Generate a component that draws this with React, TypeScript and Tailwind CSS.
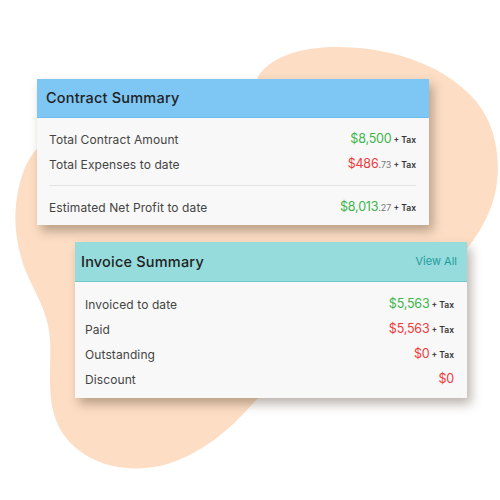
import React from "react";

const font = { fontFamily: "Inter, 'Noto Sans', sans-serif" };

function Amount({ main, cents, color, tax = true }: { main: string; cents?: string; color: string; tax?: boolean }) {
  return (
    <span className="flex items-baseline">
      <span className={`text-[12.5px] tracking-[-0.2px] ${color}`}>{main}</span>
      {cents && <span className="text-[9px] text-[#777]">{cents}</span>}
      {tax && <span className="ml-[2px] text-[8.5px] font-semibold text-[#333]">+ Tax</span>}
    </span>
  );
}

function Row({ label, children }: { label: string; children: React.ReactNode }) {
  return (
    <div className="flex h-[25px] items-center justify-between">
      <span className="text-[12px] text-[#444] tracking-[0.1px]">{label}</span>
      {children}
    </div>
  );
}

export default function App() {
  const green = "text-[#3cb54a]";
  const red = "text-[#f03a3a]";
  return (
    <div className="relative h-[500px] w-[500px] overflow-hidden bg-white" style={font}>
      <svg className="absolute left-0 top-0" width="500" height="500" viewBox="0 0 500 500">
        <path
          d="M257 79 C 265 62, 290 48, 333 47 C 380 46, 440 60, 475 100 C 502 132, 502 178, 491 207 C 480 236, 465 250, 450 270 C 400 330, 300 370, 257 399 C 230 430, 200 456, 160 466 C 120 474, 83 462, 63 434 C 44 405, 52 370, 50 340 C 48 305, 28 285, 21 257 C 13 230, 13 200, 24 170 C 45 120, 120 90, 180 82 C 220 78, 245 82, 257 79 Z"
          fill="#fddec5"
        />
      </svg>
      <div className="relative flex flex-col pt-[79px]">
        <div className="ml-[37px] w-[392px] bg-[#f8f8f8] shadow-[4px_6px_10px_rgba(60,40,20,0.35)]">
          <div className="flex h-[39px] items-center border-b border-[#6fbcee] bg-[#7ec6f3] pl-[9px]">
            <span className="text-[14.5px] font-medium text-[#222] tracking-[0.2px]">Contract Summary</span>
          </div>
          <div className="px-[12px] pb-[5px] pt-[9px] pr-[13px]">
            <Row label="Total Contract Amount">
              <Amount main="$8,500" color={green} />
            </Row>
            <Row label="Total Expenses to date">
              <Amount main="$486" cents=".73" color={red} />
            </Row>
            <div className="mt-[8px] h-px bg-[#e3e3e3]" />
            <div className="mt-[9px]">
              <Row label="Estimated Net Profit to date">
                <Amount main="$8,013" cents=".27" color={green} />
              </Row>
            </div>
          </div>
        </div>
        <div className="ml-[75px] mt-[17px] w-[392px] bg-[#f8f8f8] shadow-[4px_6px_10px_rgba(60,40,20,0.35)]">
          <div className="flex h-[40px] items-center justify-between border-b border-[#6fcacb] bg-[#96dcdd] pl-[6px] pr-[10px]">
            <span className="text-[14.5px] font-medium text-[#222] tracking-[0.2px]">Invoice Summary</span>
            <span className="text-[11px] text-[#1e9a9a]">View All</span>
          </div>
          <div className="pb-[6px] pl-[10px] pr-[13px] pt-[10px]">
            <Row label="Invoiced to date">
              <Amount main="$5,563" color={green} />
            </Row>
            <Row label="Paid">
              <Amount main="$5,563" color={red} />
            </Row>
            <Row label="Outstanding">
              <Amount main="$0" color={red} />
            </Row>
            <Row label="Discount">
              <Amount main="$0" color={red} tax={false} />
            </Row>
          </div>
        </div>
      </div>
    </div>
  );
}
